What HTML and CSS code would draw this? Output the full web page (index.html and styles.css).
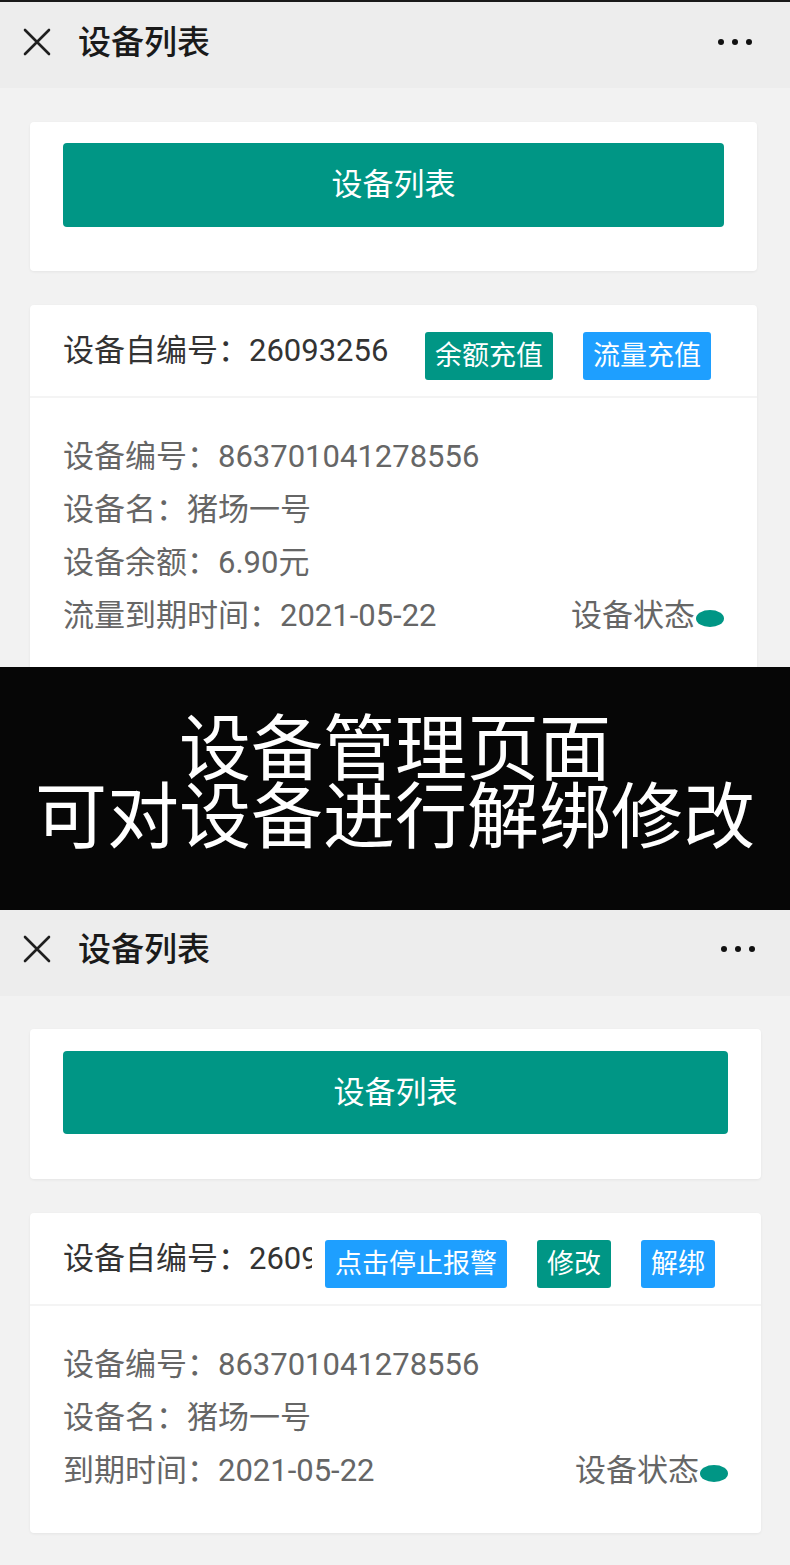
FILE: index.html
```html
<!DOCTYPE html>
<html lang="zh-CN">
<head>
<meta charset="utf-8">
<title>设备列表</title>
<link rel="stylesheet" href="styles.css">
</head>
<body>
<div class="screen screen--a">
  <header class="topbar">
    <svg class="close" viewBox="0 0 28 28" width="28" height="28" aria-hidden="true"><path d="M2 2 L26 26 M26 2 L2 26" stroke="#1f1f1f" stroke-width="2.6" stroke-linecap="round" fill="none"/></svg>
    <h1 class="title">设备列表</h1>
    <span class="more"><i></i><i></i><i></i></span>
  </header>
  <main class="content">
    <section class="card card--nav"><button class="btn-block">设备列表</button></section>
    <section class="card device">
      <div class="device-head">
        <span class="device-id">设备自编号：26093256</span>
        <div class="actions">
          <button class="tag tag--green">余额充值</button>
          <button class="tag tag--blue">流量充值</button>
        </div>
      </div>
      <div class="device-body">
        <p class="row">设备编号：863701041278556</p>
        <p class="row">设备名：猪场一号</p>
        <p class="row">设备余额：6.90元</p>
        <p class="row row--status"><span>流量到期时间：2021-05-22</span><span class="status">设备状态<i class="dot"></i></span></p>
      </div>
    </section>
  </main>
</div>

<div class="banner">
  <p class="banner-line">设备管理页面</p>
  <p class="banner-line">可对设备进行解绑修改</p>
</div>

<div class="screen screen--b">
  <header class="topbar">
    <svg class="close" viewBox="0 0 28 28" width="28" height="28" aria-hidden="true"><path d="M2 2 L26 26 M26 2 L2 26" stroke="#1f1f1f" stroke-width="2.6" stroke-linecap="round" fill="none"/></svg>
    <h1 class="title">设备列表</h1>
    <span class="more"><i></i><i></i><i></i></span>
  </header>
  <main class="content">
    <section class="card card--nav"><button class="btn-block">设备列表</button></section>
    <section class="card device">
      <div class="device-head">
        <span class="device-id">设备自编号：26093256</span>
        <div class="actions">
          <button class="tag tag--blue">点击停止报警</button>
          <button class="tag tag--green">修改</button>
          <button class="tag tag--blue">解绑</button>
        </div>
      </div>
      <div class="device-body">
        <p class="row">设备编号：863701041278556</p>
        <p class="row">设备名：猪场一号</p>
        <p class="row row--status"><span>到期时间：2021-05-22</span><span class="status">设备状态<i class="dot"></i></span></p>
      </div>
    </section>
  </main>
</div>
</body>
</html>
```

FILE: styles.css
```css
* { box-sizing: border-box; }
html, body { margin: 0; padding: 0; }
body {
  width: 790px;
  height: 1565px;
  overflow: hidden;
  background: #f2f2f2;
  font-family: Roboto, "Noto Sans CJK SC", sans-serif;
}
p { margin: 0; }

.screen { background: #f2f2f2; overflow: hidden; }
.screen--a { height: 667px; border-top: 2px solid #1a1a1a; }
.screen--b { height: 655px; }

.topbar {
  height: 86px;
  background: #ededed;
  display: flex;
  align-items: center;
  padding: 0 38px 6px 23px;
}
.close { flex: none; width: 28px; height: 28px; }
.title {
  margin: 0 0 0 27px;
  font-size: 33px;
  font-weight: 500;
  color: #1a1a1a;
  line-height: 1;
  flex: 1;
}
.more { display: flex; gap: 8px; }
.more i { width: 6px; height: 6px; border-radius: 50%; background: #111; display: block; }
.screen--b .more { margin-right: -3px; }
.screen--b .topbar { padding-bottom: 8px; }

.content {
  display: flex;
  flex-direction: column;
  gap: 34px;
  padding: 34px 33px 0 30px;
}
.screen--b .content { padding: 33px 29px 0 30px; }

.card {
  background: #fff;
  border-radius: 4px;
  box-shadow: 0 1px 3px rgba(0,0,0,0.06);
}
.card--nav { padding: 21px 33px 44px; }
.screen--b .card--nav { padding: 22px 33px 45px; }

.btn-block {
  display: block;
  width: 100%;
  height: 84px;
  border: 0;
  border-radius: 4px;
  background: #009685;
  color: #fff;
  font-family: inherit;
  font-size: 31px;
  line-height: 84px;
  padding: 0;
}
.screen--b .btn-block { height: 83px; }

.device-head {
  height: 93px;
  display: flex;
  align-items: center;
  padding: 0 46px 0 33px;
  border-bottom: 2px solid #f4f4f4;
}
.device-id {
  flex: 1;
  min-width: 0;
  overflow: hidden;
  white-space: nowrap;
  font-size: 31px;
  color: #333;
  margin-top: -6px;
}
.actions { display: flex; gap: 30px; margin-left: 13px; margin-top: 10px; }
.tag {
  height: 48px;
  border: 0;
  border-radius: 3px;
  padding: 0 10px;
  color: #fff;
  font-family: inherit;
  font-size: 27px;
  line-height: 48px;
  white-space: nowrap;
}
.tag--green { background: #009685; }
.tag--blue { background: #1e9fff; }

.device-body { padding: 32px 33px 32px 33px; }
.screen--b .device-body { padding-bottom: 36px; }
.row {
  font-size: 31px;
  line-height: 53px;
  color: #666;
}
.row--status { display: flex; justify-content: space-between; align-items: center; }
.status { display: flex; align-items: center; }
.dot {
  display: block;
  width: 28px;
  height: 17px;
  border-radius: 50%;
  background: #009685;
  margin-left: 1px;
  margin-top: 6px;
}

.banner {
  height: 243px;
  background: #060606;
  color: #fff;
  text-align: center;
  padding-top: 42px;
}
.banner-line {
  font-family: "Noto Sans CJK SC", sans-serif;
  font-size: 72px;
  line-height: 68px;
  font-weight: 400;
}
```
